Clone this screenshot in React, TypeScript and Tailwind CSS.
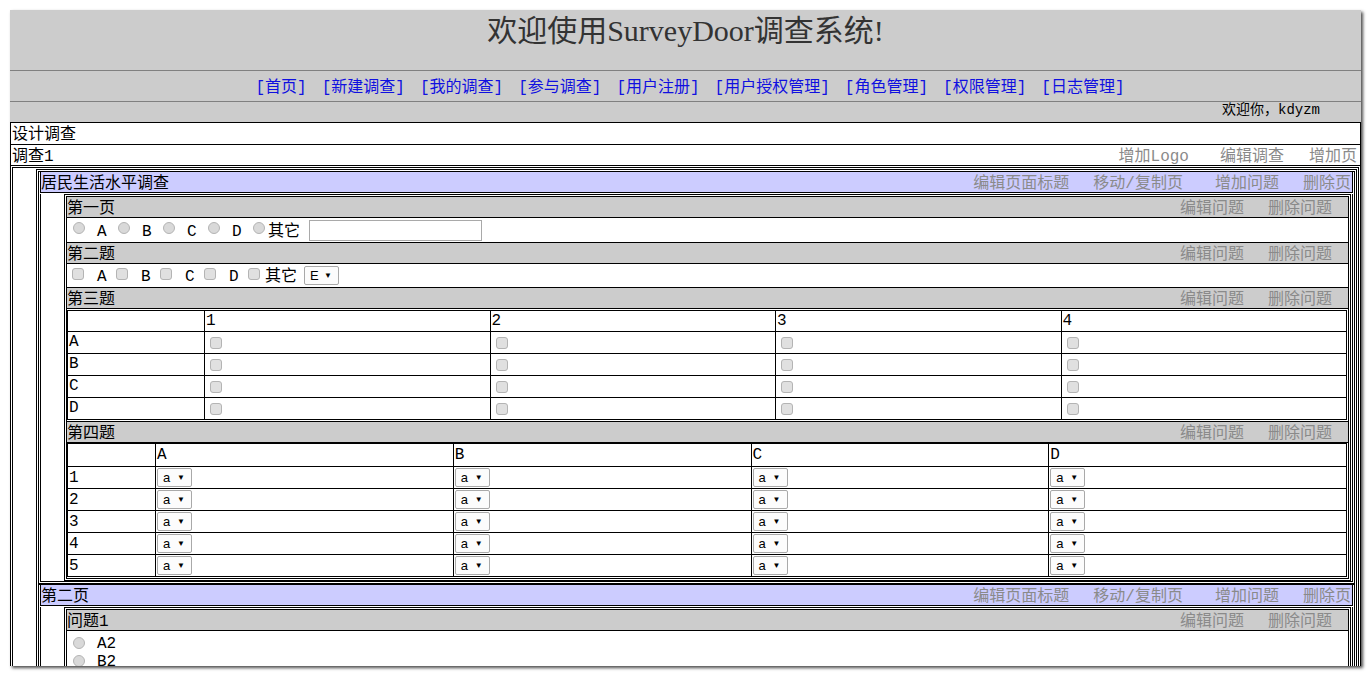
import React from "react";

const navLinks = [
  "首页",
  "新建调查",
  "我的调查",
  "参与调查",
  "用户注册",
  "用户授权管理",
  "角色管理",
  "权限管理",
  "日志管理",
];

function Radio() {
  return (
    <span className="block w-[12px] h-[12px] shrink-0 rounded-full border border-[#b4b4b4] bg-[#d9d9d9]" />
  );
}

function Check() {
  return (
    <span className="block w-[12px] h-[12px] shrink-0 rounded-[3px] border border-[#b4b4b4] bg-[#e0e0e0]" />
  );
}

function Sel({ value }: { value: string }) {
  return (
    <span className="flex items-center w-[35px] h-[19px] shrink-0 rounded-[2px] border border-[#a9a9a9] bg-[#fcfcfc] pl-[5px] pr-[6px] text-[13px] leading-none text-black font-['Liberation_Sans',sans-serif]">
      <span>{value}</span>
      <span className="ml-auto text-[8px]">▼</span>
    </span>
  );
}

function QHead({ title }: { title: string }) {
  return (
    <div className="h-[21px] border-b border-black bg-[#cccccc] flex justify-between pr-[16px] pt-[3px] leading-[18px]">
      <span>{title}</span>
      <span className="flex text-[#8a8a8a]">
        <a>编辑问题</a>
        <a className="ml-[24px]">删除问题</a>
      </span>
    </div>
  );
}

function Page({ title, children }: { title: string; children: React.ReactNode }) {
  return (
    <div className="border border-black px-px pb-px">
      <div className="h-[21px] border-x border-b border-black bg-[#ccccff] flex justify-between pr-px pt-[3px] leading-[18px]">
        <span>{title}</span>
        <span className="flex text-[#8a8a8a]">
          <a>编辑页面标题</a>
          <a className="ml-[24px]">移动/复制页</a>
          <a className="ml-[32px]">增加问题</a>
          <a className="ml-[24px]">删除页</a>
        </span>
      </div>
      <div className="mt-px border-x border-b border-black flex pr-px">
        <div className="w-[23px] shrink-0" />
        <div className="flex-1 min-w-0 border border-black p-px">
          <div className="border border-black">{children}</div>
        </div>
      </div>
    </div>
  );
}

function Matrix3() {
  const cols = ["1", "2", "3", "4"];
  return (
    <div className="border-b border-black pt-px pb-px pr-px">
      <div className="grid grid-cols-[137px_1fr_1fr_1fr_1fr] border-t border-l border-black">
        <div className="h-[21px] border-r border-b border-black" />
        {cols.map((c) => (
          <div key={c} className="h-[21px] border-r border-b border-black pl-px pt-px leading-[19px]">
            {c}
          </div>
        ))}
        {["A", "B", "C", "D"].map((r) => (
          <React.Fragment key={r}>
            <div className="h-[22px] border-r border-b border-black pl-px pt-px leading-[19px]">{r}</div>
            {cols.map((c) => (
              <div key={c} className="h-[22px] border-r border-b border-black pl-[5px] flex items-center">
                <Check />
              </div>
            ))}
          </React.Fragment>
        ))}
      </div>
    </div>
  );
}

function Matrix4() {
  const cols = ["A", "B", "C", "D"];
  return (
    <div className="pb-px pr-px">
      <div className="grid grid-cols-[88px_1fr_1fr_1fr_1fr] border-t border-l border-black">
        <div className="h-[23px] border-r border-b border-black" />
        {cols.map((c) => (
          <div key={c} className="h-[23px] border-r border-b border-black pl-px pt-px leading-[21px]">
            {c}
          </div>
        ))}
        {["1", "2", "3", "4", "5"].map((r) => (
          <React.Fragment key={r}>
            <div className="h-[22px] border-r border-b border-black pl-px pt-px leading-[20px]">{r}</div>
            {cols.map((c) => (
              <div key={c} className="h-[22px] border-r border-b border-black pl-px flex items-center">
                <Sel value="a" />
              </div>
            ))}
          </React.Fragment>
        ))}
      </div>
    </div>
  );
}

export default function App() {
  return (
    <div className="min-h-screen bg-white pt-[10px] pl-[10px]">
      <div className="w-[1351px] h-[656px] overflow-hidden bg-white text-[16px] text-black shadow-[2px_2px_3px_rgba(0,0,0,0.7)] font-['Liberation_Mono','Noto_Sans_CJK_SC',monospace]">
        <header className="h-[60px] bg-[#cccccc] flex justify-center pt-[3px]">
          <h1 className="text-[30px] leading-[36px] text-[#333] font-['Liberation_Serif','Noto_Sans_CJK_SC',serif]">
            欢迎使用SurveyDoor调查系统!
          </h1>
        </header>
        <nav className="h-[32px] border-y border-[#808080] bg-[#cccccc] flex items-center justify-center gap-[15px] pl-[9px] pt-[3px] text-[#1010e0] leading-[20px]">
          {navLinks.map((l) => (
            <a key={l}>[{l}]</a>
          ))}
        </nav>
        <div className="h-[20px] bg-[#cccccc] flex items-center justify-end pr-[41px] pb-[3px] text-[14px]">
          欢迎你，kdyzm
        </div>

        <div className="border border-black">
          <div className="h-[22px] border-b border-black pl-px pt-[3px] leading-[19px]">设计调查</div>
          <div className="h-[21px] border-b border-black pl-px pr-[3px] pt-[3px] flex justify-between leading-[18px]">
            <span>调查1</span>
            <span className="flex text-[#8a8a8a]">
              <a>增加Logo</a>
              <a className="ml-[31px]">编辑调查</a>
              <a className="ml-[25px]">增加页</a>
            </span>
          </div>

          <div className="mx-px mt-px border border-black flex pt-px pr-px">
            <div className="w-[23px] shrink-0" />
            <div className="flex-1 min-w-0 border-x border-t border-black px-px pt-px">
              <Page title="居民生活水平调查">
                <QHead title="第一页" />
                <div className="h-[25px] border-b border-black flex items-center pl-[6px] leading-[20px]">
                  {["A", "B", "C", "D"].map((l) => (
                    <span key={l} className="flex items-center w-[45px] shrink-0">
                      <span className="mb-[5px]">
                        <Radio />
                      </span>
                      <span className="ml-[12px] pt-[3px]">{l}</span>
                    </span>
                  ))}
                  <span className="flex items-center">
                    <span className="mb-[5px]">
                      <Radio />
                    </span>
                    <span className="ml-[3px] pt-[3px]">其它</span>
                  </span>
                  <span className="ml-[9px] w-[173px] h-[21px] border border-[#a9a9a9] bg-white" />
                </div>

                <QHead title="第二题" />
                <div className="h-[24px] border-b border-black flex items-center pl-[5px] leading-[20px]">
                  {["A", "B", "C", "D"].map((l) => (
                    <span key={l} className="flex items-center w-[44px] shrink-0">
                      <span className="mb-[4px]">
                        <Check />
                      </span>
                      <span className="ml-[13px] pt-[3px]">{l}</span>
                    </span>
                  ))}
                  <span className="flex items-center">
                    <span className="mb-[4px]">
                      <Check />
                    </span>
                    <span className="ml-[5px] pt-[3px]">其它</span>
                  </span>
                  <span className="ml-[7px]">
                    <Sel value="E" />
                  </span>
                </div>

                <QHead title="第三题" />
                <Matrix3 />

                <QHead title="第四题" />
                <Matrix4 />
              </Page>

              <Page title="第二页">
                <QHead title="问题1" />
                <div className="pt-[3px] pl-[6px] pb-[4px] leading-[20px]">
                  {["A2", "B2"].map((l) => (
                    <div key={l} className="h-[18px] flex items-center">
                      <Radio />
                      <span className="ml-[12px] pt-[2px]">{l}</span>
                    </div>
                  ))}
                </div>
              </Page>
            </div>
          </div>
        </div>
      </div>
    </div>
  );
}
